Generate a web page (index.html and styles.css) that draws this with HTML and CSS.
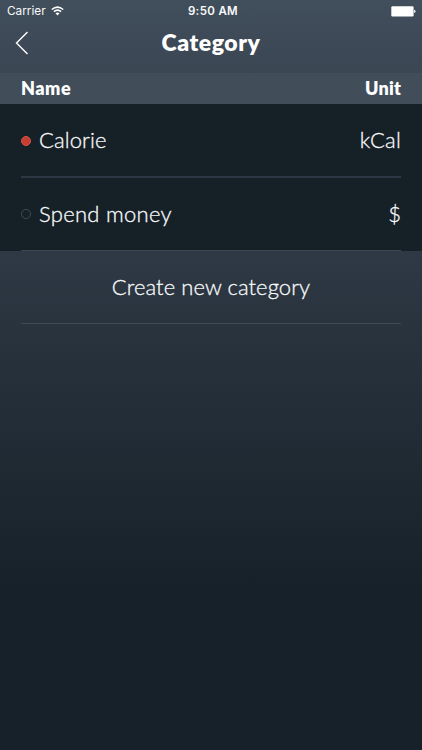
FILE: index.html
```
<!DOCTYPE html>
<html lang="en">
<head>
<meta charset="utf-8">
<title>Category</title>
<link rel="stylesheet" href="styles.css">
</head>
<body>
<div class="screen">
  <div class="status">
    <div class="carrier"><span class="carrier-name">Carrier</span>
      <svg class="wifi" width="13" height="10" viewBox="0 0 13 10" fill="none" stroke="#fff" stroke-width="1.6"><path d="M.8 3.5Q6.5-1.3 12.2 3.5M2.9 5.7Q6.5 2.7 10.1 5.7"/><path d="M4.5 7.3Q6.5 5.8 8.5 7.3L6.5 9.4Z" fill="#fff" stroke="none"/></svg>
    </div>
    <span class="time">9:50 AM</span>
    <svg class="battery" width="26" height="11" viewBox="0 0 26 11"><rect x="1.3" y=".3" width="22.3" height="10.2" rx="1.2" fill="#fff"/><path d="M24.1 3.8Q25.5 4.2 25.5 5.4T24.1 7Z" fill="#fff"/></svg>
  </div>
  <header class="nav">
    <svg class="back" width="14" height="24" viewBox="0 0 14 24" fill="none" stroke="#fff" stroke-width="1.4"><path d="M12.5 1 1.5 12l11 11"/></svg>
    <h1 class="title">Category</h1>
  </header>
  <div class="columns"><span class="col-name">Name</span><span class="col-unit">Unit</span></div>
  <main class="list">
    <div class="row"><i class="dot dot-on"></i><span class="label calorie">Calorie</span><span class="unit kcal">kCal</span></div>
    <div class="row row-last"><i class="dot"></i><span class="label spend">Spend money</span><span class="unit">$</span></div>
  </main>
  <div class="create"><span class="create-text">Create new category</span></div>
</div>
</body>
</html>
```
FILE: styles.css
```
* { box-sizing: border-box; }
body { margin: 0; }
.screen {
  width: 422px;
  height: 750px;
  overflow: hidden;
  background: linear-gradient(#414e5b 0, #3b4653 73px, #2e3945 252px, #28333e 330px, #172129 590px, #172129 100%);
  color: #f8fafb;
  font-family: Lato, sans-serif;
}
.status {
  height: 22px;
  display: grid;
  grid-template-columns: 1fr auto 1fr;
  align-items: center;
  padding: 0 6px 0 7px;
  font: 12px/22px Inter, sans-serif;
}
.carrier { display: flex; align-items: center; gap: 5px; }
.carrier-name { font-size: 11.8px; }
.time { font-weight: 600; font-size: 11.5px; letter-spacing: .35px; margin-left: 3px; }
.battery { justify-self: end; }
.nav {
  height: 51px;
  display: grid;
  grid-template-columns: 60px 1fr 60px;
  align-items: start;
}
.back { margin: 9px 0 0 15px; }
.title {
  margin: 5px 0 0;
  text-align: center;
  font-size: 23px;
  line-height: 30px;
  font-weight: 800;
  letter-spacing: .55px;
  color: #fff;
}
.columns {
  height: 31px;
  display: flex;
  justify-content: space-between;
  padding: 0 21px;
  background: #414e5a;
  color: #fff;
  font-size: 18px;
  line-height: 31px;
  font-weight: 800;
}
.col-name { letter-spacing: .5px; }
.col-unit { letter-spacing: .3px; margin-right: -.3px; }
.list { height: 147px; padding: 0 21px; background: #162027; }
.row {
  height: 74px;
  display: flex;
  align-items: center;
  border-bottom: 2px solid #2c3843;
  font-size: 22px;
  line-height: 30px;
  font-weight: 300;
  -webkit-text-stroke: .3px currentColor;
}
.row-last { height: 73px; border-bottom: 1px solid #3a4651; }
.dot {
  width: 10px;
  height: 10px;
  margin-right: 8px;
  border: 1px solid #414b54;
  border-radius: 50%;
}
.row:first-child .dot { margin-top: 1px; }
.row .dot-on { background: #c63d31; border-color: #d45549; }
.label { letter-spacing: .28px; }
.calorie { letter-spacing: .1px; }
.unit { margin-left: auto; }
.kcal { letter-spacing: .2px; }
.create {
  height: 73px;
  margin: 0 21px;
  border-bottom: 1px solid #3d4954;
  text-align: center;
  font-size: 22px;
  line-height: 71px;
  font-weight: 300;
  letter-spacing: .08px;
  -webkit-text-stroke: .3px currentColor;
}
```
